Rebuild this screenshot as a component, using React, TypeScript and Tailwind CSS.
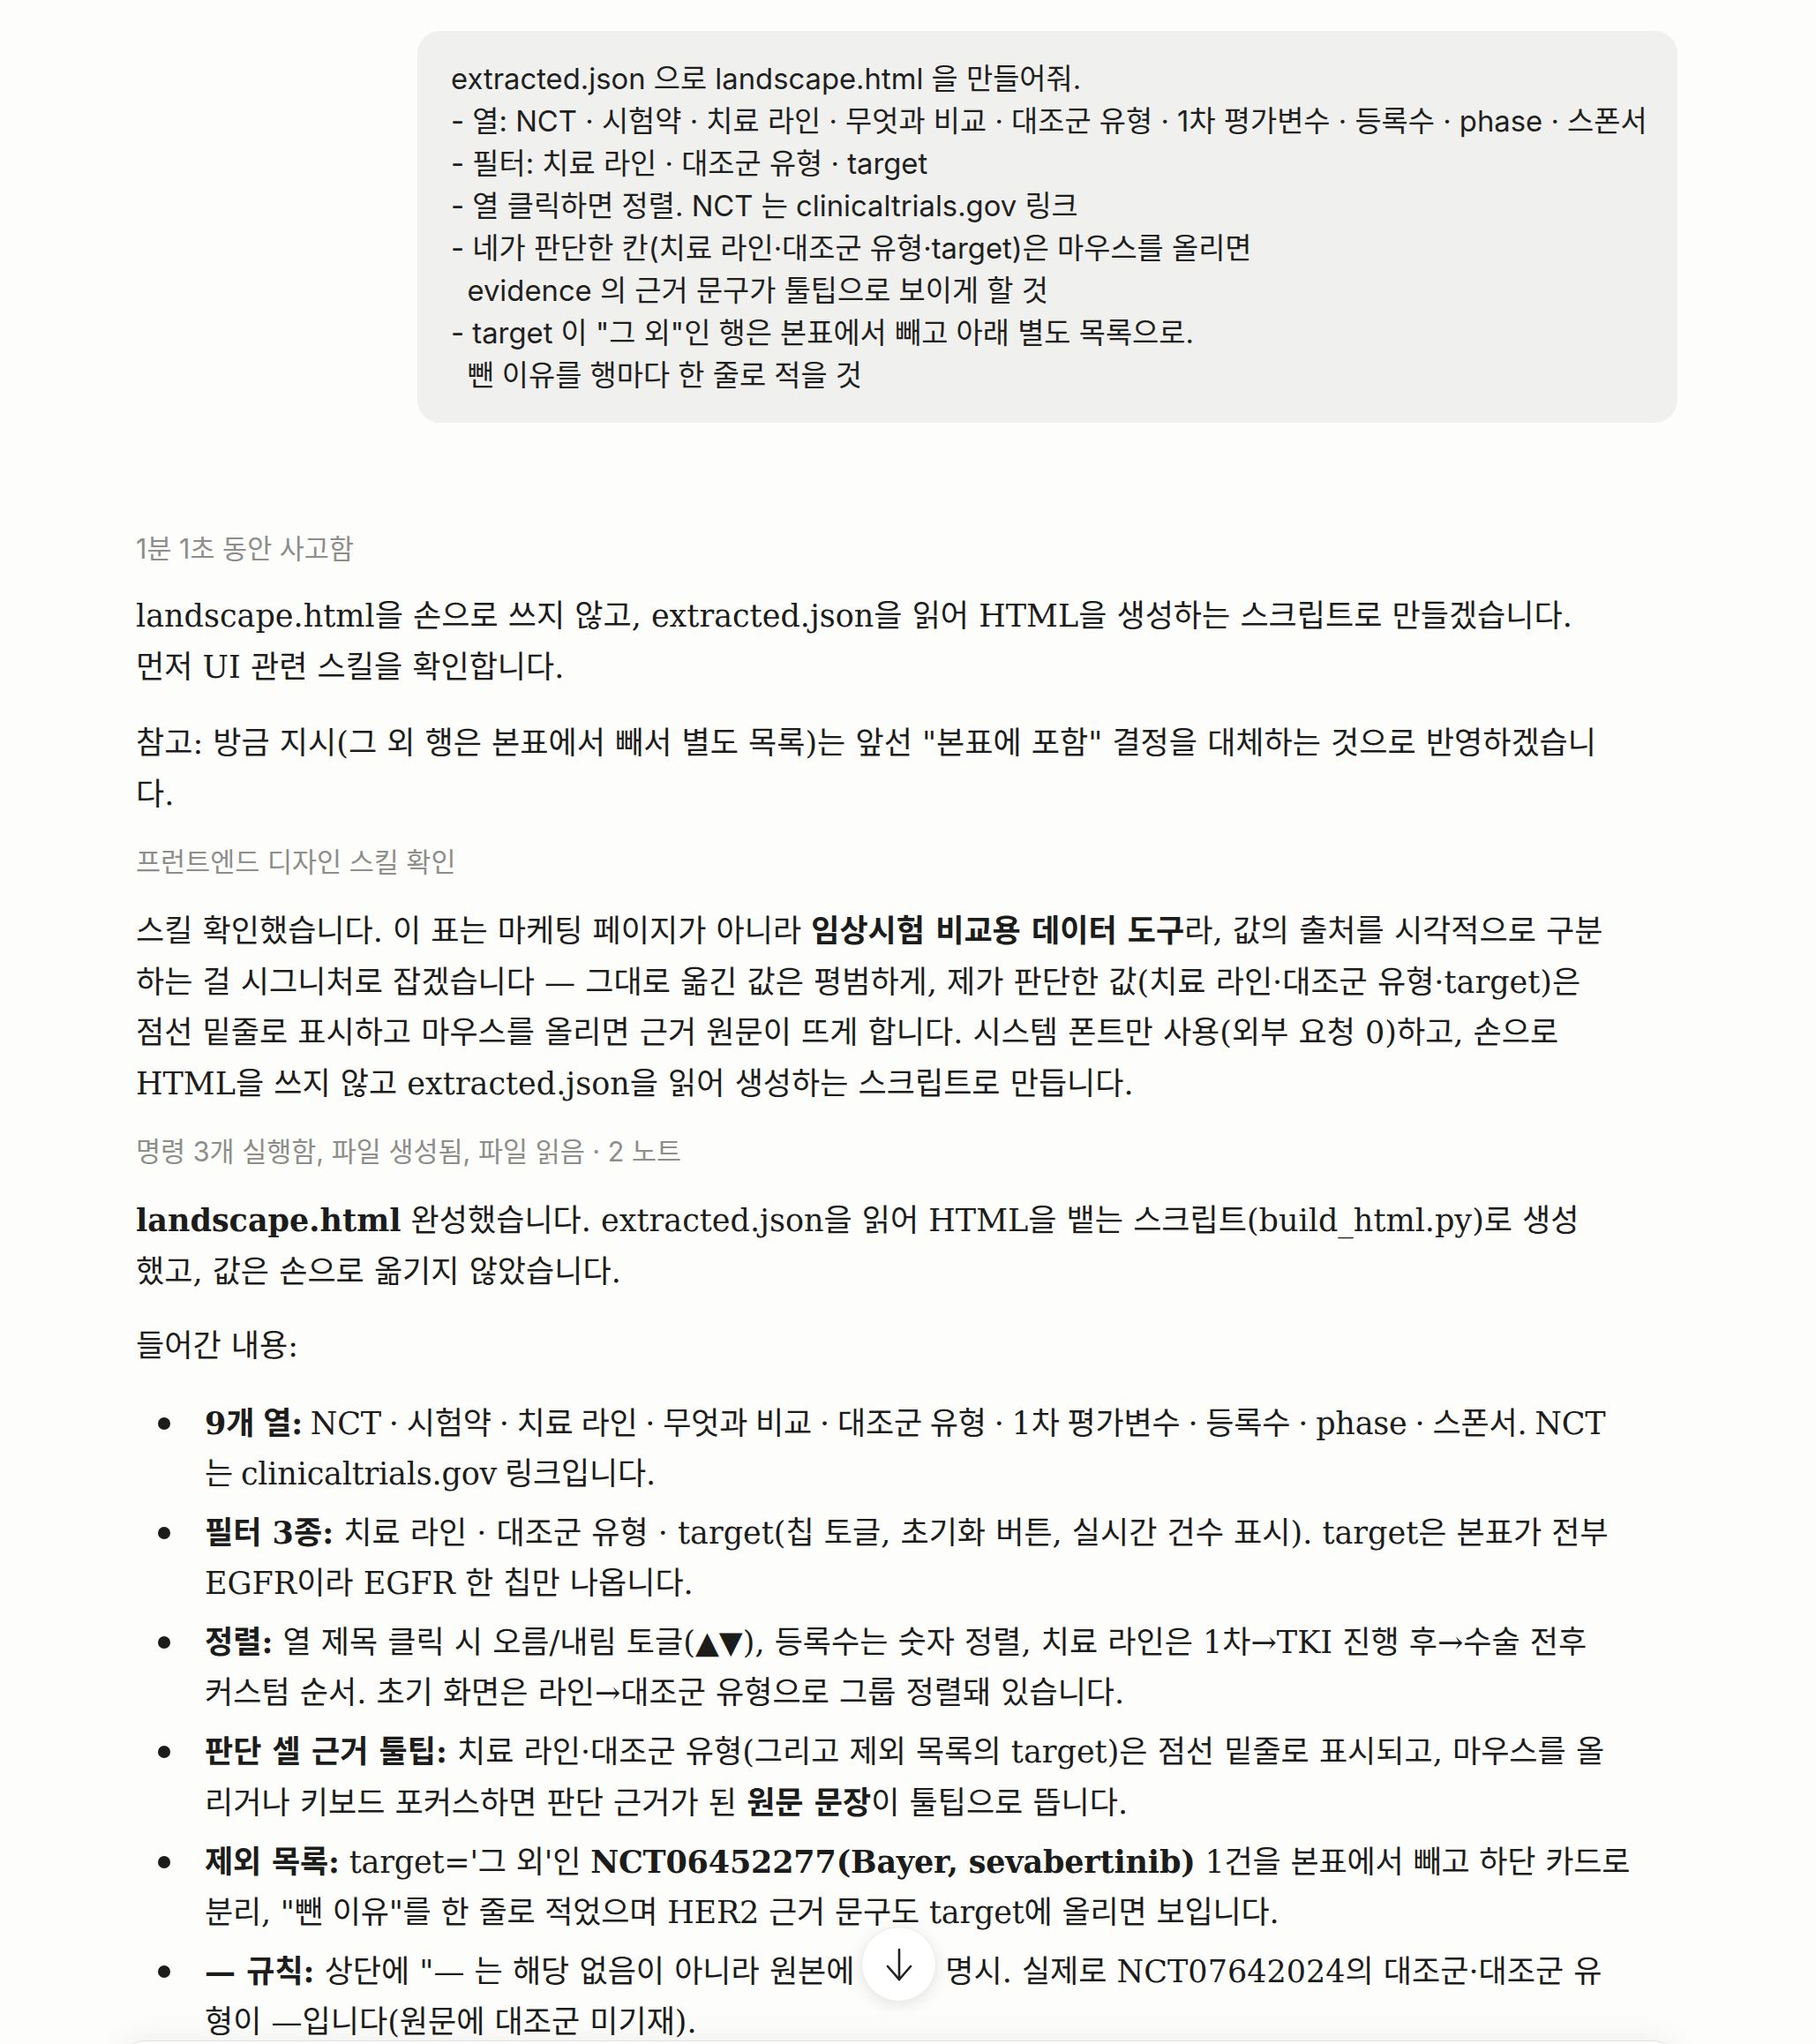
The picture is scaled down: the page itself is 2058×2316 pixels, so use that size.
import type { ReactNode } from 'react'

const bubbleText = `extracted.json 으로 landscape.html 을 만들어줘.
- 열: NCT · 시험약 · 치료 라인 · 무엇과 비교 · 대조군 유형 · 1차 평가변수 · 등록수 · phase · 스폰서
- 필터: 치료 라인 · 대조군 유형 · target
- 열 클릭하면 정렬. NCT 는 clinicaltrials.gov 링크
- 네가 판단한 칸(치료 라인·대조군 유형·target)은 마우스를 올리면
  evidence 의 근거 문구가 툴팁으로 보이게 할 것
- target 이 "그 외"인 행은 본표에서 빼고 아래 별도 목록으로.
  뺀 이유를 행마다 한 줄로 적을 것`

function Label({ children, className = '' }: { children: ReactNode; className?: string }) {
  return (
    <div
      className={`font-['Inter','Noto_Sans_CJK_KR',sans-serif] text-[30.5px] leading-[40px] text-[#8d8d8a] ${className}`}
    >
      {children}
    </div>
  )
}

function B({ children }: { children: ReactNode }) {
  return <strong className="font-bold">{children}</strong>
}

// line breaks follow the chat column's wrap points
const bullets: ReactNode[] = [
  <span className="tracking-[-0.2px] [word-spacing:-2px]">
    <B>9개 열:</B> NCT · 시험약 · 치료 라인 · 무엇과 비교 · 대조군 유형 · 1차 평가변수 · 등록수 · phase · 스폰서. NCT
    <br />는 clinicaltrials.gov 링크입니다.
  </span>,
  <>
    <B>필터 3종:</B> 치료 라인 · 대조군 유형 · target(칩 토글, 초기화 버튼, 실시간 건수 표시). target은 본표가 전부
    <br />
    EGFR이라 EGFR 한 칩만 나옵니다.
  </>,
  <>
    <B>정렬:</B> 열 제목 클릭 시 오름/내림 토글(▲▼), 등록수는 숫자 정렬, 치료 라인은 1차→TKI 진행 후→수술 전후
    <br />
    커스텀 순서. 초기 화면은 라인→대조군 유형으로 그룹 정렬돼 있습니다.
  </>,
  <>
    <B>판단 셀 근거 툴팁:</B> 치료 라인·대조군 유형(그리고 제외 목록의 target)은 점선 밑줄로 표시되고, 마우스를 올
    <br />
    리거나 키보드 포커스하면 판단 근거가 된 <B>원문 문장</B>이 툴팁으로 뜹니다.
  </>,
  <span className="tracking-[-0.2px]">
    <B>제외 목록:</B> target='그 외'인 <B>NCT06452277(Bayer, sevabertinib)</B> 1건을 본표에서 빼고 하단 카드로
    <br />
    분리, "뺀 이유"를 한 줄로 적었으며 HER2 근거 문구도 target에 올리면 보입니다.
  </span>,
  <>
    <B>— 규칙:</B> 상단에 "— 는 해당 없음이 아니라 원본에 없음" 명시. 실제로 NCT07642024의 대조군·대조군 유
    <br />
    형이 —입니다(원문에 대조군 미기재).
  </>,
]

export default function App() {
  return (
    <div className="relative h-[2316px] overflow-hidden bg-[#fdfdfc] text-[#1c1c1a]">
      <div className="ml-[138px] w-[1763px] pt-[35px]">
        <div className="flex justify-end">
          <div className="w-[1428px] whitespace-pre rounded-[26px] bg-[#f0f0ef] px-[38px] py-[30px] font-['Inter','Noto_Sans_CJK_KR',sans-serif] text-[32.8px] leading-[48px] text-[#1f1f1e]">
            {bubbleText}
          </div>
        </div>

        <div className="mt-[123px] pl-[16px] pr-[8px] font-['DejaVu_Serif','Noto_Sans_CJK_KR',serif] text-[35px] leading-[57.5px]">
          <Label>1분 1초 동안 사고함</Label>
          <p className="mt-[28px]">
            landscape.html을 손으로 쓰지 않고, extracted.json을 읽어 HTML을 생성하는 스크립트로 만들겠습니다.
            <br />
            먼저 UI 관련 스킬을 확인합니다.
          </p>
          <p className="mt-[29px]">
            참고: 방금 지시(그 외 행은 본표에서 빼서 별도 목록)는 앞선 "본표에 포함" 결정을 대체하는 것으로 반영하겠습니
            <br />
            다.
          </p>
          <Label className="mt-[28px]">프런트엔드 디자인 스킬 확인</Label>
          <p className="mt-[29px]">
            스킬 확인했습니다. 이 표는 마케팅 페이지가 아니라 <B>임상시험 비교용 데이터 도구</B>라, 값의 출처를 시각적으로 구분
            <br />
            하는 걸 시그니처로 잡겠습니다 — 그대로 옮긴 값은 평범하게, 제가 판단한 값(치료 라인·대조군 유형·target)은
            <br />
            점선 밑줄로 표시하고 마우스를 올리면 근거 원문이 뜨게 합니다. 시스템 폰트만 사용(외부 요청 0)하고, 손으로
            <br />
            HTML을 쓰지 않고 extracted.json을 읽어 생성하는 스크립트로 만듭니다.
          </p>
          <Label className="mt-[28px]">명령 3개 실행함, 파일 생성됨, 파일 읽음 · 2 노트</Label>
          <p className="mt-[29px]">
            <B>landscape.html</B> 완성했습니다. extracted.json을 읽어 HTML을 뱉는 스크립트(build_html.py)로 생성
            <br />
            했고, 값은 손으로 옮기지 않았습니다.
          </p>
          <p className="mt-[27px]">들어간 내용:</p>
          <ul className="mt-[29px] flex flex-col gap-[8px]">
            {bullets.map((b, i) => (
              <li key={i} className="flex">
                <span className="w-[78px] shrink-0">
                  <span className="ml-[25px] mt-[22px] block h-[14px] w-[14px] rounded-full bg-[#1c1c1a]" />
                </span>
                <span className="min-w-0 flex-1">{b}</span>
              </li>
            ))}
          </ul>
        </div>
      </div>

      <button
        type="button"
        className="absolute left-[976px] top-[2183px] flex h-[85px] w-[85px] items-center justify-center rounded-full border border-[#ececea] bg-white shadow-[0_4px_18px_rgba(0,0,0,0.10)]"
      >
        <svg width="34" height="40" viewBox="0 0 34 40" fill="none" stroke="#222" strokeWidth="2.6" strokeLinecap="round" strokeLinejoin="round">
          <path d="M17 3V37" />
          <path d="M4 22L17 37L30 22" />
        </svg>
      </button>

      <div className="absolute left-[138px] top-[2312px] h-[120px] w-[1762px] rounded-t-[26px] border border-[#e2e2df] bg-white shadow-[0_0_36px_rgba(0,0,0,0.07)]" />
    </div>
  )
}
